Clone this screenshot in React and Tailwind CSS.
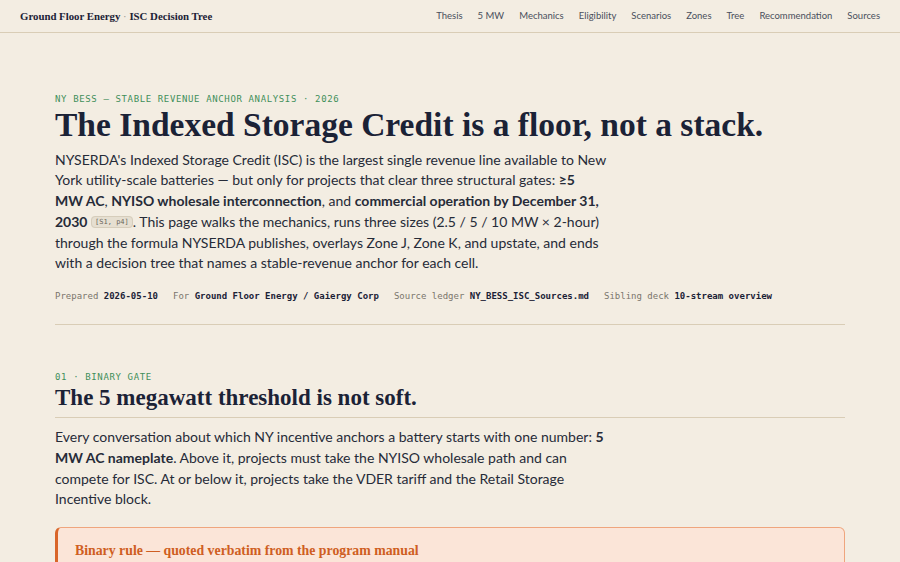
const navLinks = ["Thesis", "5 MW", "Mechanics", "Eligibility", "Scenarios", "Zones", "Tree", "Recommendation", "Sources"];

const serif = "font-['Liberation_Serif',serif]";
const sans = "font-['Lato',sans-serif]";
const mono = "font-['DejaVu_Sans_Mono',monospace]";

function Meta({ label, value }) {
  return (
    <span className="mr-[15px]">
      <span className="text-[#7a756c]">{label}</span>{" "}
      <span className="font-bold text-[#1b2236]">{value}</span>
    </span>
  );
}

export default function App() {
  return (
    <div className="min-h-screen bg-[#f3ede2] text-[#1b2236]">

      {/* Top bar */}
      <header className="h-[33px] flex items-center justify-between px-5 border-b border-[#d9cdb6]">
        <div className={`${serif} text-[10.8px] font-bold`}>
          Ground Floor Energy <span className="text-[#9a948a] font-normal">·</span> ISC Decision Tree
        </div>
        <nav className={`${sans} flex gap-[15px] text-[9.5px] text-[#4a4f5c]`}>
          {navLinks.map((link) => (
            <span key={link}>{link}</span>
          ))}
        </nav>
      </header>

      <main className="max-w-[790px] mx-auto">

        {/* Hero */}
        <section className="pt-[60px] pb-[20px] border-b border-[#d9cdb6]">
          <div className={`${mono} text-[9px] tracking-[0.07em] text-[#3f8f5a]`}>
            NY BESS — STABLE REVENUE ANCHOR ANALYSIS · 2026
          </div>
          <h1 className={`${serif} text-[33.5px] leading-[34px] font-bold mt-[1px]`}>
            The Indexed Storage Credit is a floor, not a stack.
          </h1>
          <p className={`${sans} text-[14px] leading-[20.8px] mt-[8px] whitespace-nowrap text-[#262b38]`}>
            NYSERDA's Indexed Storage Credit (ISC) is the largest single revenue line available to New<br />
            York utility-scale batteries — but only for projects that clear three structural gates: <b>≥5</b><br />
            <b>MW AC</b>, <b>NYISO wholesale interconnection</b>, and <b>commercial operation by December 31,</b><br />
            <b>2030</b>{" "}
            <span className={`${mono} text-[7px] align-[3px] px-[3px] py-[1px] bg-[#e6dfd1] border border-[#d6cdbb] rounded-sm text-[#6a655c]`}>
              [S1, p4]
            </span>
            . This page walks the mechanics, runs three sizes (2.5 / 5 / 10 MW × 2-hour)<br />
            through the formula NYSERDA publishes, overlays Zone J, Zone K, and upstate, and ends<br />
            with a decision tree that names a stable-revenue anchor for each cell.
          </p>
          <div className={`${mono} text-[9px] mt-[16px]`}>
            <Meta label="Prepared" value="2026-05-10" />
            <Meta label="For" value="Ground Floor Energy / Gaiergy Corp" />
            <Meta label="Source ledger" value="NY_BESS_ISC_Sources.md" />
            <Meta label="Sibling deck" value="10-stream overview" />
          </div>
        </section>

        {/* 01 Binary gate */}
        <section className="pt-[46px]">
          <div className={`${mono} text-[9px] tracking-[0.07em] text-[#3f8f5a]`}>01 · BINARY GATE</div>
          <h2 className={`${serif} text-[23px] leading-[26px] font-bold mt-[1px] pb-[6px] border-b border-[#d9cdb6]`}>
            The 5 megawatt threshold is not soft.
          </h2>
          <p className={`${sans} text-[14px] leading-[20.7px] mt-[9px] whitespace-nowrap text-[#262b38]`}>
            Every conversation about which NY incentive anchors a battery starts with one number: <b>5</b><br />
            <b>MW AC nameplate</b>. Above it, projects must take the NYISO wholesale path and can<br />
            compete for ISC. At or below it, projects take the VDER tariff and the Retail Storage<br />
            Incentive block.
          </p>

          <div className="mt-[17px] bg-[#fbe5d8] border border-[#efa57d] border-l-[3px] border-l-[#d9662a] rounded-md px-[17px] pt-[13px] pb-5">
            <div className={`${serif} text-[13.8px] font-bold text-[#cf5e22]`}>
              Binary rule — quoted verbatim from the program manual
            </div>
          </div>
        </section>
      </main>
    </div>
  );
}
